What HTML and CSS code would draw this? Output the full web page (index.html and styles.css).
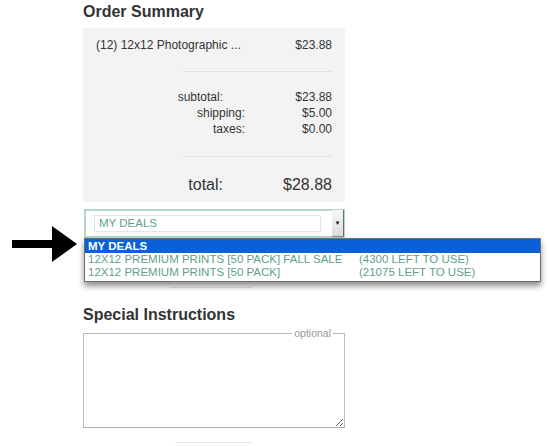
FILE: index.html
```html
<!DOCTYPE html>
<html lang="en">
<head>
    <meta charset="UTF-8">
    <meta name="viewport" content="width=device-width, initial-scale=1.0">
    <title>Order Summary</title>
    <link rel="stylesheet" href="styles.css">
</head>
<body>
    <div class="checkout">
        <h2 class="section-title">Order Summary</h2>
        <div class="summary">
            <div class="line-item">
                <span>(12) 12x12 Photographic ...</span>
                <span>$23.88</span>
            </div>
            <hr class="divider">
            <div class="totals">
                <span class="label short">subtotal:</span><span class="amount">$23.88</span>
                <span class="label">shipping:</span><span class="amount">$5.00</span>
                <span class="label">taxes:</span><span class="amount">$0.00</span>
            </div>
            <hr class="divider divider-low">
            <div class="totals grand">
                <span class="label short">total:</span><span class="amount">$28.88</span>
            </div>
        </div>

        <div class="deal-select">
            <div class="deal-field">MY DEALS</div>
            <div class="deal-button">&#9660;</div>
            <ul class="deal-list">
                <li class="selected"><span>MY DEALS</span></li>
                <li><span>12X12 PREMIUM PRINTS [50 PACK] FALL SALE</span><span>(4300 LEFT TO USE)</span></li>
                <li><span>12X12 PREMIUM PRINTS [50 PACK]</span><span>(21075 LEFT TO USE)</span></li>
            </ul>
        </div>
        <div class="deal-apply"></div>

        <h2 class="section-title instructions-title">Special Instructions</h2>
        <fieldset class="instructions">
            <legend>optional</legend>
            <textarea id="instructions" name="instructions"></textarea>
        </fieldset>
        <div class="submit-peek"></div>
    </div>

    <!-- pointer arrow drawn over the screenshot -->
    <svg class="pointer" width="66" height="37" viewBox="0 0 66 37">
        <rect x="0" y="14" width="44" height="8" fill="#000"/>
        <polygon points="40,0 65,18 40,36" fill="#000"/>
    </svg>
</body>
</html>
```

FILE: styles.css
```css
body {
    font-family: "Liberation Sans", Arial, sans-serif;
    margin: 0;
    color: #333;
    background: #fff;
}
.checkout {
    position: relative;
    padding-left: 83px;
    width: 262px;
}
.section-title {
    font-size: 16px;
    font-weight: bold;
    line-height: 20px;
    margin: 0;
    padding-top: 2px;
    color: #333;
}
.summary {
    margin-top: 6px;
    background: #f3f3f3;
    padding: 9px 13px 7px;
    font-size: 12px;
    line-height: 16px;
}
.line-item {
    display: flex;
    justify-content: space-between;
}
.divider {
    border: none;
    border-top: 1px solid #e0e0e0;
    width: 149px;
    margin: 18px 0 17px auto;
}
.divider-low {
    margin: 19px 0 18px auto;
}
.totals {
    display: grid;
    grid-template-columns: 1fr 87px;
}
.totals .label {
    text-align: right;
}
.totals .label.short {
    padding-right: 22px;
}
.totals .amount {
    text-align: right;
}
.totals.grand {
    font-size: 16px;
    line-height: 20px;
}
.deal-select {
    position: relative;
    margin: 7px 0 0 1px;
    width: 261px;
    height: 29px;
    box-sizing: border-box;
    border: 2px solid #b3d7c9;
    background: #fff;
}
.deal-field {
    position: absolute;
    left: 8px;
    top: 4px;
    width: 227px;
    height: 17px;
    box-sizing: border-box;
    border: 1px solid #dce9e4;
    padding-left: 4px;
    font-size: 11.5px;
    line-height: 15px;
    color: #5f9f89;
}
.deal-button {
    position: absolute;
    right: -1px;
    top: -1px;
    width: 12px;
    height: 27px;
    box-sizing: border-box;
    background: linear-gradient(#f7f7f7, #dcdcdc);
    border-right: 1px solid #6e6e6e;
    border-bottom: 1px solid #8a8a8a;
    font-size: 6px;
    line-height: 27px;
    text-align: center;
    color: #111;
}
.deal-list {
    position: absolute;
    left: -2px;
    top: 27px;
    width: 457px;
    margin: 0;
    padding: 0;
    list-style: none;
    box-sizing: border-box;
    border: 1px solid #6f6f6f;
    background: #fff;
    box-shadow: 0 4px 6px rgba(0, 0, 0, 0.45);
    z-index: 2;
    font-size: 11.5px;
    color: #5f9f89;
}
.deal-list li {
    display: grid;
    grid-template-columns: 271px 1fr;
    height: 13px;
    line-height: 13px;
    padding-left: 3px;
    white-space: nowrap;
}
.deal-list li.selected {
    height: 14px;
    line-height: 14px;
    background: #0a60d6;
    color: #fff;
    font-weight: bold;
}
.deal-list li:last-child {
    height: 15px;
}
.deal-apply {
    margin: 7px 0 0 86px;
    width: 84px;
    height: 42px;
    border-bottom: 1px solid #e6e6e6;
    border-radius: 0 0 3px 3px;
}
.instructions-title {
    margin-top: 15px;
}
.instructions {
    margin: 2px 0 0;
    padding: 0;
    min-width: 0;
    border: 1px solid #b7bbc3;
    border-bottom-color: #a9aeb6;
}
.instructions legend {
    margin-left: auto;
    margin-right: 11px;
    padding: 0 2px;
    font-size: 10.5px;
    line-height: 12px;
    color: #999;
}
.instructions textarea {
    display: block;
    width: 100%;
    height: 88px;
    box-sizing: border-box;
    border: none;
    outline: none;
    padding: 4px;
    font-family: "Liberation Sans", Arial, sans-serif;
    background: transparent;
}
.submit-peek {
    margin: 14px 0 0 92px;
    width: 78px;
    height: 6px;
    border-top: 1px solid #e6e6e6;
    border-radius: 3px 3px 0 0;
}
.pointer {
    position: absolute;
    left: 12px;
    top: 226px;
}
```
